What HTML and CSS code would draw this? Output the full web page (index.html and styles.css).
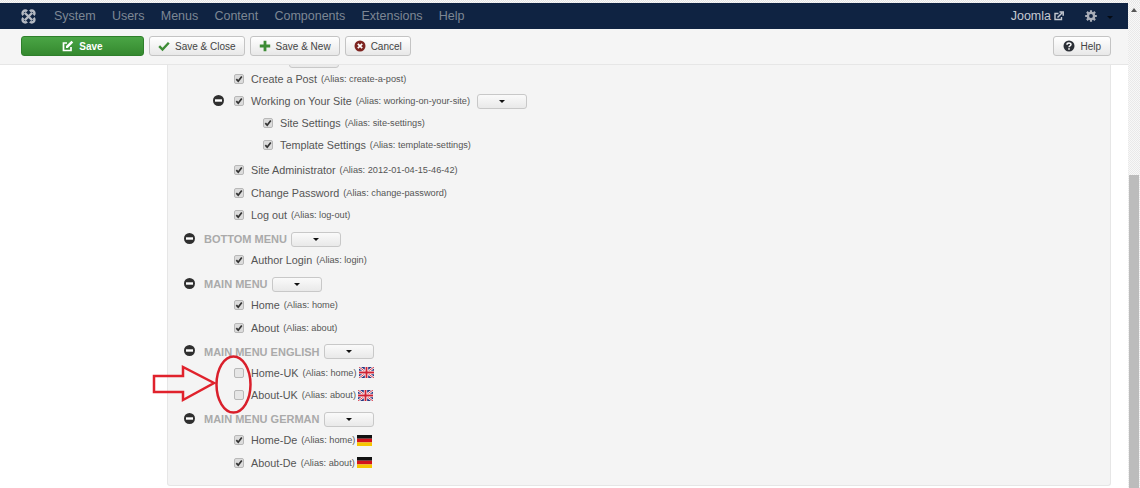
FILE: index.html
```html
<!DOCTYPE html>
<html lang="en">
<head>
    <meta charset="UTF-8">
    <title>Menu Assignment</title>
    <link rel="stylesheet" href="styles.css">
</head>
<body>
    <svg width="0" height="0" class="defs">
        <symbol id="minus" viewBox="0 0 11 11">
            <circle cx="5.5" cy="5.5" r="5.5" fill="#2f2f2f"/>
            <rect x="2" y="4.3" width="7" height="2.4" fill="#fff"/>
        </symbol>
        <symbol id="check" viewBox="0 0 10 10">
            <path d="M2.3 5.2 4.2 7.2 7.8 2.4" fill="none" stroke="#333" stroke-width="1.7"/>
        </symbol>
        <symbol id="uk" viewBox="0 0 16 11" preserveAspectRatio="none">
            <rect width="16" height="11" fill="#26367f"/>
            <path d="M0 0 16 11M16 0 0 11" stroke="#fff" stroke-width="2.4"/>
            <path d="M0 0 16 11M16 0 0 11" stroke="#cf2335" stroke-width="0.9"/>
            <path d="M8 0V11M0 5.500H16" stroke="#fff" stroke-width="3.600"/>
            <path d="M8 0V11M0 5.500H16" stroke="#cf2335" stroke-width="2"/>
        </symbol>
        <symbol id="de" viewBox="0 0 16 11" preserveAspectRatio="none">
            <rect width="16" height="3.700" fill="#111"/>
            <rect y="3.700" width="16" height="3.700" fill="#d3141c"/>
            <rect y="7.400" width="16" height="3.600" fill="#f6c600"/>
        </symbol>
    </svg>

    <div class="top-strip"></div>

    <div class="page">
        <div class="window">
            <nav class="navbar">
                <svg class="logo" viewBox="0 0 16 16">
                    <g fill="none" stroke="#b4b9c2" stroke-width="2.600">
                        <path d="M4 4 12 12M12 4 4 12"/>
                        <path d="M2.500 6.500A2.400 2.400 0 1 1 6.500 2.500M9.500 2.500A2.400 2.400 0 1 1 13.500 6.500M13.500 9.500A2.400 2.400 0 1 1 9.500 13.500M6.500 13.500A2.400 2.400 0 1 1 2.500 9.500"/>
                    </g>
                </svg>
                <ul class="nav-menu">
                    <li>System</li>
                    <li>Users</li>
                    <li>Menus</li>
                    <li>Content</li>
                    <li>Components</li>
                    <li>Extensions</li>
                    <li>Help</li>
                </ul>
                <div class="nav-right">
                    <span class="site-link">Joomla
                        <svg class="ext-icon" viewBox="0 0 10 10">
                            <path d="M7.500 6V8.500H1V2.500H4.500" fill="none" stroke="#c5c9d1" stroke-width="1.400"/>
                            <path d="M3.500 6.500 8 2M5.500 1H9.200V4.700" fill="none" stroke="#c5c9d1" stroke-width="1.500"/>
                        </svg>
                    </span>
                    <svg class="gear" viewBox="0 0 12 12">
                        <path d="M6 .2V11.800M.2 6H11.800M1.900 1.900 10.100 10.100M10.100 1.900 1.900 10.100" stroke="#a9aeb8" stroke-width="2.200"/>
                        <circle cx="6" cy="6" r="4.300" fill="#a9aeb8"/>
                        <circle cx="6" cy="6" r="1.900" fill="#0f2342"/>
                    </svg>
                    <span class="nav-caret"></span>
                </div>
            </nav>

            <div class="toolbar">
                <button class="btn btn-save">
                    <svg class="icon" viewBox="0 0 12 12">
                        <path d="M9 7V10.500H1.500V3H5" fill="none" stroke="#fff" stroke-width="1.700"/>
                        <path d="M4 6 9.500 .8 11.200 2.500 5.800 8H4Z" fill="#fff"/>
                    </svg>
                    Save
                </button>
                <button class="btn">
                    <svg class="icon" viewBox="0 0 12 12">
                        <path d="M1.200 6.200 4.500 9.500 10.800 2.800" fill="none" stroke="#3d8c35" stroke-width="2.400"/>
                    </svg>
                    Save &amp; Close
                </button>
                <button class="btn">
                    <svg class="icon" viewBox="0 0 12 12">
                        <path d="M6 .8V11.200M.8 6H11.200" stroke="#3d8c35" stroke-width="2.800"/>
                    </svg>
                    Save &amp; New
                </button>
                <button class="btn">
                    <svg class="icon" viewBox="0 0 12 12">
                        <circle cx="6" cy="6" r="5.500" fill="#7d2420"/>
                        <path d="M3.800 3.800 8.200 8.200M8.200 3.800 3.800 8.200" stroke="#fff" stroke-width="1.700"/>
                    </svg>
                    Cancel
                </button>
                <button class="btn btn-help">
                    <svg class="icon" viewBox="0 0 12 12">
                        <circle cx="6" cy="6" r="5.500" fill="#2b2f36"/>
                        <path d="M4 4.700C4 2.600 8 2.600 8 4.600 8 6 6 5.800 6 7.200" fill="none" stroke="#fff" stroke-width="1.500"/>
                        <rect x="5.200" y="8.200" width="1.600" height="1.500" fill="#fff"/>
                    </svg>
                    Help
                </button>
            </div>

            <main class="content">
                <div class="panel">
                    <ul class="tree">
                        <li class="row stub"><span class="dropdown"></span></li>
                        <li class="row">
                            <span class="check on"><svg><use href="#check"/></svg></span>
                            <span class="name">Create a Post</span> <span class="alias">(Alias: create-a-post)</span>
                        </li>
                        <li class="row">
                            <svg class="toggle nested-toggle"><use href="#minus"/></svg>
                            <span class="check on"><svg><use href="#check"/></svg></span>
                            <span class="name">Working on Your Site</span> <span class="alias">(Alias: working-on-your-site)</span>
                            <span class="dropdown"></span>
                        </li>
                        <li>
                            <ul class="tree sub">
                                <li class="row">
                                    <span class="check on"><svg><use href="#check"/></svg></span>
                                    <span class="name">Site Settings</span> <span class="alias">(Alias: site-settings)</span>
                                </li>
                                <li class="row">
                                    <span class="check on"><svg><use href="#check"/></svg></span>
                                    <span class="name">Template Settings</span> <span class="alias">(Alias: template-settings)</span>
                                </li>
                            </ul>
                        </li>
                        <li class="row">
                            <span class="check on"><svg><use href="#check"/></svg></span>
                            <span class="name">Site Administrator</span> <span class="alias">(Alias: 2012-01-04-15-46-42)</span>
                        </li>
                        <li class="row">
                            <span class="check on"><svg><use href="#check"/></svg></span>
                            <span class="name">Change Password</span> <span class="alias">(Alias: change-password)</span>
                        </li>
                        <li class="row">
                            <span class="check on"><svg><use href="#check"/></svg></span>
                            <span class="name">Log out</span> <span class="alias">(Alias: log-out)</span>
                        </li>
                    </ul>

                    <div class="menu-head">
                        <svg class="toggle"><use href="#minus"/></svg>
                        <span class="menu-title">BOTTOM MENU</span>
                        <span class="dropdown"></span>
                    </div>
                    <ul class="tree">
                        <li class="row">
                            <span class="check on"><svg><use href="#check"/></svg></span>
                            <span class="name">Author Login</span> <span class="alias">(Alias: login)</span>
                        </li>
                    </ul>

                    <div class="menu-head">
                        <svg class="toggle"><use href="#minus"/></svg>
                        <span class="menu-title">MAIN MENU</span>
                        <span class="dropdown"></span>
                    </div>
                    <ul class="tree">
                        <li class="row">
                            <span class="check on"><svg><use href="#check"/></svg></span>
                            <span class="name">Home</span> <span class="alias">(Alias: home)</span>
                        </li>
                        <li class="row">
                            <span class="check on"><svg><use href="#check"/></svg></span>
                            <span class="name">About</span> <span class="alias">(Alias: about)</span>
                        </li>
                    </ul>

                    <div class="menu-head">
                        <svg class="toggle"><use href="#minus"/></svg>
                        <span class="menu-title">MAIN MENU ENGLISH</span>
                        <span class="dropdown"></span>
                    </div>
                    <ul class="tree">
                        <li class="row">
                            <span class="check"></span>
                            <span class="name">Home-UK</span> <span class="alias">(Alias: home)</span>
                            <svg class="flag"><use href="#uk"/></svg>
                        </li>
                        <li class="row">
                            <span class="check"></span>
                            <span class="name">About-UK</span> <span class="alias">(Alias: about)</span>
                            <svg class="flag"><use href="#uk"/></svg>
                        </li>
                    </ul>

                    <div class="menu-head">
                        <svg class="toggle"><use href="#minus"/></svg>
                        <span class="menu-title">MAIN MENU GERMAN</span>
                        <span class="dropdown"></span>
                    </div>
                    <ul class="tree">
                        <li class="row">
                            <span class="check on"><svg><use href="#check"/></svg></span>
                            <span class="name">Home-De</span> <span class="alias">(Alias: home)</span>
                            <svg class="flag"><use href="#de"/></svg>
                        </li>
                        <li class="row">
                            <span class="check on"><svg><use href="#check"/></svg></span>
                            <span class="name">About-De</span> <span class="alias">(Alias: about)</span>
                            <svg class="flag"><use href="#de"/></svg>
                        </li>
                    </ul>
                </div>
            </main>
        </div>

        <div class="scrollbar">
            <span class="scroll-up"></span>
            <span class="scroll-thumb"></span>
        </div>

        <!-- red markup drawn over the screenshot -->
        <svg class="markup" viewBox="0 0 100 64">
            <path d="M1 24H30V15L61 31 30 48V40H1Z" fill="none" stroke="#e0222c" stroke-width="2.500"/>
            <ellipse cx="80.500" cy="32.500" rx="17" ry="28" fill="none" stroke="#d91f2b" stroke-width="2.500"/>
        </svg>
    </div>
</body>
</html>
```

FILE: styles.css
```css
* {
    box-sizing: border-box;
}

html, body {
    margin: 0;
    height: 488px;
    overflow: hidden;
}

body {
    background: #fff;
    font-family: "Liberation Sans", Arial, sans-serif;
    color: #555;
    display: flex;
    flex-direction: column;
}

.defs {
    position: absolute;
}

ul {
    list-style: none;
    margin: 0;
    padding: 0;
}

.top-strip {
    height: 3px;
    flex: none;
    background: repeating-conic-gradient(#e6e6e6 0 25%, #f8f8f8 0 50%) 0 0 / 2px 2px;
}

.page {
    position: relative;
    flex: 1;
    display: flex;
    min-height: 0;
}

.window {
    flex: 1;
    min-width: 0;
    display: flex;
    flex-direction: column;
}

/* navbar */
.navbar {
    height: 26px;
    flex: none;
    display: flex;
    align-items: center;
    padding-left: 21px;
    background: #0f2342;
    color: #7d8794;
    font-size: 12.5px;
}

.logo {
    width: 15px;
    height: 15px;
}

.nav-menu {
    display: flex;
    gap: 16.200px;
    margin-left: 18px;
}

.nav-right {
    margin-left: auto;
    display: flex;
    align-items: center;
    padding-right: 15px;
}

.site-link {
    color: #c5c9d1;
    display: flex;
    align-items: center;
    gap: 3px;
}

.ext-icon {
    width: 10px;
    height: 10px;
}

.gear {
    width: 12px;
    height: 12px;
    margin-left: 21px;
}

.nav-caret {
    margin-left: 10px;
    margin-top: 2px;
    border: 3px solid transparent;
    border-top-color: #050a12;
    border-bottom: 0;
}

/* toolbar */
.toolbar {
    height: 36px;
    flex: none;
    display: flex;
    align-items: center;
    gap: 5px;
    padding: 0 17px 1px 21px;
    background: #f5f5f5;
    border-bottom: 1px solid #e6e6e6;
}

.btn {
    height: 20px;
    display: flex;
    align-items: center;
    justify-content: center;
    gap: 5px;
    padding: 0 8px;
    border: 1px solid #c4c4c4;
    border-radius: 3px;
    background: linear-gradient(#fff, #e8e8e8);
    color: #444;
    font-family: inherit;
    font-size: 10px;
}

.btn-save {
    width: 123px;
    border-color: #2f7f2b;
    background: linear-gradient(#4aa545, #35892f);
    color: #fff;
    font-weight: bold;
}

.btn-help {
    margin-left: auto;
    padding: 0 9px;
}

.icon {
    width: 12px;
    height: 12px;
    flex: none;
}

/* menu tree */
.content {
    flex: 1;
    min-height: 0;
    overflow: hidden;
    padding-left: 167px;
    padding-right: 17px;
}

.panel {
    margin-top: -20px;
    height: 441px;
    padding-left: 16px;
    background: #f4f4f4;
    border: 1px solid #e6e6e6;
    border-top: 0;
    border-radius: 0 0 3px 3px;
}

.tree {
    padding-left: 50px;
}

.tree.sub {
    padding-left: 29px;
    margin: -1px 0 2.5px;
}

.row {
    height: 22.5px;
    display: flex;
    align-items: center;
    white-space: pre;
}

.stub {
    align-items: flex-end;
    padding-left: 55px;
}

.stub .dropdown {
    margin-left: 0;
}

.check {
    width: 10px;
    height: 10px;
    flex: none;
    margin-right: 7px;
    border: 1px solid #b8b8b8;
    border-radius: 2px;
    background: #e6e6e6;
}

.check.on {
    background: #dcdcdc;
}

.check svg {
    display: block;
    width: 10px;
    height: 10px;
    margin: -1px;
}

.name {
    font-size: 10.800px;
    color: #555;
}

.alias {
    font-size: 9.200px;
    color: #555;
    margin-left: 4px;
}

.flag {
    width: 15px;
    height: 11px;
    flex: none;
    margin-left: 2px;
}

.toggle {
    width: 11px;
    height: 11px;
    flex: none;
    margin: -2px 9px 0 0;
}

.nested-toggle {
    margin: -2px 10px 0 -21px;
}

.menu-head {
    height: 19.5px;
    margin-top: 3px;
    display: flex;
    align-items: center;
}

.menu-title {
    font-size: 11px;
    font-weight: bold;
    color: #aaa;
}

.dropdown {
    width: 50px;
    height: 15px;
    flex: none;
    margin-left: 7px;
    display: flex;
    align-items: center;
    justify-content: center;
    border: 1px solid #c8c8c8;
    border-radius: 3px;
    background: linear-gradient(#fafafa, #e9e9e9);
}

.menu-head .dropdown {
    margin-left: 4px;
}

.dropdown::after {
    content: "";
    border: 3px solid transparent;
    border-top: 3px solid #111;
    border-bottom: 0;
}

/* scrollbar */
.scrollbar {
    width: 12px;
    flex: none;
    position: relative;
    background: repeating-conic-gradient(#e9e9e9 0 25%, #f8f8f8 0 50%) 0 0 / 2px 2px;
    display: flex;
    flex-direction: column;
    align-items: center;
}

.scroll-up {
    margin-top: 5px;
    border: 3.5px solid transparent;
    border-bottom: 4px solid #555;
    border-top: 0;
}

.scroll-thumb {
    width: 10px;
    height: 313px;
    margin-top: auto;
    background: #bcbcbc;
}

.markup {
    position: absolute;
    left: 153px;
    top: 349px;
    width: 100px;
    height: 64px;
    overflow: visible;
}
```
